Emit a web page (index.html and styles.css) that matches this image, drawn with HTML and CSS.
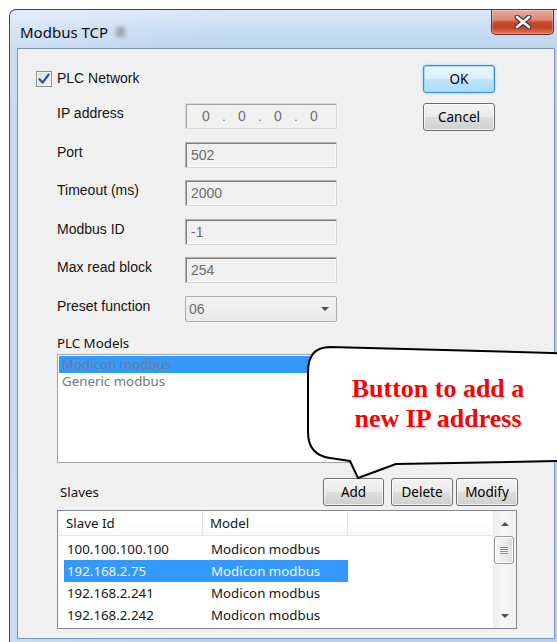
FILE: index.html
```html
<!DOCTYPE html>
<html lang="en">
<head>
<meta charset="utf-8">
<title>Modbus TCP</title>
<link rel="stylesheet" href="styles.css">
</head>
<body>
<div class="window">
  <div class="titlebar">
    <span class="title">Modbus TCP</span>
    <span class="glass-smudge"></span>
    <button class="close" type="button" aria-label="Close">
      <svg width="18" height="14" viewBox="0 0 18 14">
        <path d="M3 2 L15 12 M15 2 L3 12" stroke="#3b3b3b" stroke-width="5" stroke-linecap="round"/>
        <path d="M3 2 L15 12 M15 2 L3 12" stroke="#ffffff" stroke-width="2.6" stroke-linecap="round"/>
      </svg>
    </button>
  </div>

  <div class="client">
    <div class="top">
      <div class="form">
        <label class="check-row">
          <span class="checkbox">
            <svg width="14" height="14" viewBox="0 0 14 14">
              <path d="M2.5 7.2 L5.6 10.6 L11.6 2.6" fill="none" stroke="#2f4e93" stroke-width="2.2" stroke-linecap="round" stroke-linejoin="round"/>
            </svg>
          </span>
          <span class="check-label">PLC Network</span>
        </label>

        <div class="grid">
          <span class="label">IP address</span>
          <div class="field ip-field">
            <span class="octet">0</span><span class="dot">.</span>
            <span class="octet">0</span><span class="dot">.</span>
            <span class="octet">0</span><span class="dot">.</span>
            <span class="octet">0</span>
          </div>

          <span class="label">Port</span>
          <div class="field">502</div>

          <span class="label">Timeout (ms)</span>
          <div class="field">2000</div>

          <span class="label">Modbus ID</span>
          <div class="field">-1</div>

          <span class="label">Max read block</span>
          <div class="field">254</div>

          <span class="label">Preset function</span>
          <div class="combo">
            <span>06</span>
            <span class="combo-arrow"></span>
          </div>
        </div>
      </div>

      <div class="dialog-buttons">
        <button class="btn btn-default" type="button">OK</button>
        <button class="btn" type="button">Cancel</button>
      </div>
    </div>

    <div class="section-label">PLC Models</div>
    <ul class="listbox">
      <li class="selected">Modicon modbus</li>
      <li>Generic modbus</li>
    </ul>

    <div class="slaves-bar">
      <span class="slaves-label">Slaves</span>
      <button class="btn btn-add" type="button">Add</button>
      <button class="btn btn-delete" type="button">Delete</button>
      <button class="btn btn-modify" type="button">Modify</button>
    </div>

    <div class="listview">
      <div class="lv-main">
        <div class="lv-header">
          <span class="hcell">Slave Id</span>
          <span class="hcell">Model</span>
        </div>
        <div class="lv-rows">
          <div class="lv-row"><span>100.100.100.100</span><span>Modicon modbus</span></div>
          <div class="lv-row selected"><span>192.168.2.75</span><span>Modicon modbus</span></div>
          <div class="lv-row"><span>192.168.2.241</span><span>Modicon modbus</span></div>
          <div class="lv-row"><span>192.168.2.242</span><span>Modicon modbus</span></div>
        </div>
      </div>
      <div class="scrollbar">
        <div class="sb-btn"><span class="tri-up"></span></div>
        <div class="sb-thumb"><span class="grip"></span></div>
        <div class="sb-track"></div>
        <div class="sb-btn"><span class="tri-down"></span></div>
      </div>
    </div>
  </div>
</div>

<!-- annotation balloon pointing at the Add button -->
<svg class="callout" width="557" height="642" viewBox="0 0 557 642">
  <path d="M330 347 L552 353 Q590 354 590 380 L590 440 Q590 461 560 461 L396 464 L358 478 L350 461 L330 458 Q308 455 308 432 L308 372 Q308 347 330 347 Z"
        fill="#ffffff" stroke="#000000" stroke-width="2" stroke-linejoin="round"/>
</svg>
<div class="callout-text">Button to add a<br>new IP address</div>
</body>
</html>
```

FILE: styles.css
```css
* {
  box-sizing: border-box;
}

html,
body {
  margin: 0;
  height: 100%;
}

body {
  position: relative;
  overflow: hidden;
  background: #ffffff;
  font-family: "Liberation Sans", Arial, sans-serif;
  color: #111111;
}

/* ---------- window frame ---------- */
.window {
  margin: 9px 0 0 9px;
  width: 556px;
  height: 650px;
  border: 1px solid #3e4855;
  border-bottom: none;
  border-radius: 7px 7px 0 0;
  background:
    linear-gradient(90deg, rgba(255, 255, 255, 0.25), rgba(255, 255, 255, 0) 40%),
    linear-gradient(180deg, #dce9f7 0px, #c9ddf2 18px, #bcd4ee 38px, #b2cbe8 120px, #b8d0eb 100%);
}

.titlebar {
  display: flex;
  align-items: flex-start;
  height: 38px;
  padding: 0 10px 0 10px;
}

.title {
  margin-top: 12px;
  line-height: 20px;
  font-family: "Noto Sans", "Open Sans", sans-serif;
  font-size: 15px;
  color: #0b0b0b;
}

.glass-smudge {
  width: 9px;
  height: 10px;
  margin: 17px 0 0 8px;
  background: #8d969f;
  filter: blur(2px);
  opacity: 0.8;
}

.close {
  margin-left: auto;
  width: 63px;
  height: 25px;
  padding: 0;
  display: flex;
  align-items: center;
  justify-content: center;
  border: 1px solid #6b2a20;
  border-top: none;
  border-radius: 0 0 5px 5px;
  background: linear-gradient(180deg, #e9ab9b 0%, #dc8b76 40%, #c84a31 52%, #c4422a 72%, #dc7457 100%);
  box-shadow: inset 0 0 0 1px rgba(255, 255, 255, 0.28);
}

/* ---------- client area ---------- */
.client {
  margin-left: 7px;
  width: 538px;
  height: 591px;
  padding-top: 16px;
  border: 1px solid #8092a8;
  background: #f0f0f0;
}

.top {
  display: flex;
  padding-left: 18px;
}

.form {
  padding-top: 6px;
}

.check-row {
  display: flex;
  align-items: center;
  gap: 5px;
  height: 16px;
}

.checkbox {
  width: 16px;
  height: 16px;
  display: flex;
  align-items: center;
  justify-content: center;
  border: 1px solid #8e8f8f;
  background: linear-gradient(135deg, #dadada, #f7f7f7);
  box-shadow: inset 0 0 0 1px #f4f4f4;
}

.check-label,
.label {
  font-size: 14px;
  line-height: 16px;
  color: #141414;
}

.check-label {
  margin-top: -3px;
}

.grid {
  display: grid;
  grid-template-columns: 128px 152px;
  grid-auto-rows: 26px;
  row-gap: 12.5px;
  margin: 16px 0 0 21px;
}

.label {
  padding-top: 2px;
}

.field {
  height: 26px;
  padding-left: 5px;
  border: 1px solid #b1b1b1;
  border-right-color: #d6d6d6;
  border-bottom-color: #d6d6d6;
  box-shadow: inset 1px 1px 0 #7d7d7d, inset -1px -1px 0 #f9f9f9;
  background: #f0f0f0;
  font-size: 14px;
  line-height: 24px;
  color: #6d6d6d;
}

.ip-field {
  display: flex;
  padding-left: 15px;
  border-color: #d8d8d8;
  box-shadow: inset 1px 1px 0 #a2a2a2;
}

.octet {
  width: 10px;
  text-align: center;
}

.dot {
  width: 26px;
  text-align: center;
  font-size: 12px;
  line-height: 27px;
}

.combo {
  display: flex;
  align-items: center;
  justify-content: space-between;
  padding: 0 7px 0 3px;
  border: 1px solid #acacac;
  border-radius: 2px;
  background: linear-gradient(180deg, #f3f3f3, #e9e9e9);
  font-size: 14px;
  color: #6d6d6d;
}

.combo-arrow {
  width: 0;
  height: 0;
  border-left: 4.5px solid transparent;
  border-right: 4.5px solid transparent;
  border-top: 4.5px solid #4a4a4a;
}

/* ---------- push buttons ---------- */
.dialog-buttons {
  display: flex;
  flex-direction: column;
  gap: 10px;
  margin-left: 86px;
}

.btn {
  height: 28px;
  padding: 0;
  border: 1px solid #707070;
  border-radius: 3px;
  background: linear-gradient(180deg, #f3f3f3 0%, #ebebeb 48%, #dddddd 52%, #cfcfcf 100%);
  box-shadow: inset 0 0 0 1px rgba(255, 255, 255, 0.7);
  font-family: "Noto Sans", "Open Sans", sans-serif;
  font-size: 13.5px;
  color: #000000;
}

.dialog-buttons .btn {
  width: 72px;
}

.btn-default {
  border-color: #3c8fd8;
  background: linear-gradient(180deg, #eaf6fd 0%, #d9f0fc 48%, #bee6fd 52%, #a9dbf6 100%);
  box-shadow: inset 0 0 0 1px #9fd8f8, 0 0 2px #65b6ee;
}

/* ---------- PLC models list ---------- */
.section-label,
.slaves-label {
  font-family: "Noto Sans", "Open Sans", sans-serif;
  font-size: 13.3px;
  line-height: 16px;
  color: #111111;
}

.section-label {
  margin: 13.5px 0 0 39px;
}

.listbox {
  list-style: none;
  margin: 3px 0 0 39px;
  padding: 1px;
  width: 460px;
  height: 109px;
  border: 1px solid #a3a3a3;
  background: #ffffff;
  font-family: "Noto Sans", "Open Sans", sans-serif;
  font-size: 13.3px;
  color: #777777;
}

.listbox li {
  height: 17px;
  line-height: 17px;
  padding-left: 3px;
}

.listbox li.selected {
  background: #3399ff;
  color: #6f7c8a;
}

/* ---------- slaves ---------- */
.slaves-bar {
  display: flex;
  align-items: center;
  width: 461px;
  height: 28px;
  margin: 15px 0 0 39px;
}

.slaves-label {
  margin-left: 3px;
}

.btn-add {
  width: 61px;
  margin-left: auto;
}

.btn-delete {
  width: 62px;
  margin-left: 7px;
}

.btn-modify {
  width: 62px;
  margin-left: 3px;
}

.listview {
  display: flex;
  width: 460px;
  height: 119px;
  margin: 4px 0 0 39px;
  border: 1px solid #828790;
  background: #ffffff;
  font-family: "Noto Sans", "Open Sans", sans-serif;
  font-size: 13.3px;
  color: #151515;
}

.lv-main {
  flex: 1;
}

.lv-header {
  display: flex;
  height: 25px;
  border-bottom: 1px solid #e3e6ea;
  background: linear-gradient(180deg, #ffffff 0%, #ffffff 55%, #f6f7f9 100%);
}

.hcell {
  width: 145px;
  line-height: 24px;
  border-right: 1px solid #e3e6ea;
}

.hcell:first-child {
  padding-left: 8px;
}

.hcell:nth-child(2) {
  padding-left: 7px;
}

.lv-rows {
  padding: 2px 0 0 6px;
}

.lv-row {
  display: grid;
  grid-template-columns: 144px 140px;
  width: 284px;
  height: 22px;
  line-height: 22px;
}

.lv-row span {
  padding-left: 3px;
  white-space: nowrap;
}

.lv-row.selected {
  background: #3399ff;
  color: #eef6ff;
}

/* ---------- vertical scrollbar ---------- */
.scrollbar {
  display: flex;
  flex-direction: column;
  width: 23px;
  border-left: 1px solid #ececec;
  background: linear-gradient(90deg, #eeeeee, #f6f6f6 40%, #f1f1f1);
}

.sb-btn {
  height: 24px;
  display: flex;
  align-items: center;
  justify-content: center;
}

.sb-btn:first-child {
  height: 25px;
}

.tri-up,
.tri-down {
  width: 0;
  height: 0;
  border-left: 4px solid transparent;
  border-right: 4px solid transparent;
}

.tri-up {
  border-bottom: 4px solid #4d4d4d;
}

.tri-down {
  border-top: 4px solid #4d4d4d;
}

.sb-thumb {
  height: 28px;
  margin: 0 2px 0 0;
  display: flex;
  align-items: center;
  justify-content: center;
  border: 1px solid #9a9a9a;
  border-radius: 3px;
  background: linear-gradient(90deg, #f5f5f5, #ececec 50%, #dcdcdc);
  box-shadow: inset 0 0 0 1px #fbfbfb;
}

.grip {
  width: 8px;
  height: 7px;
  background: repeating-linear-gradient(180deg, #8c8c8c 0 1px, #f2f2f2 1px 2px);
}

.sb-track {
  flex: 1;
}

/* ---------- annotation balloon ---------- */
.callout {
  position: absolute;
  left: 0;
  top: 0;
  pointer-events: none;
}

.callout-text {
  position: absolute;
  left: 318px;
  top: 374px;
  width: 240px;
  text-align: center;
  font-family: "Liberation Serif", "Times New Roman", serif;
  font-weight: bold;
  font-size: 26px;
  line-height: 30px;
  color: #ff0000;
}
```
